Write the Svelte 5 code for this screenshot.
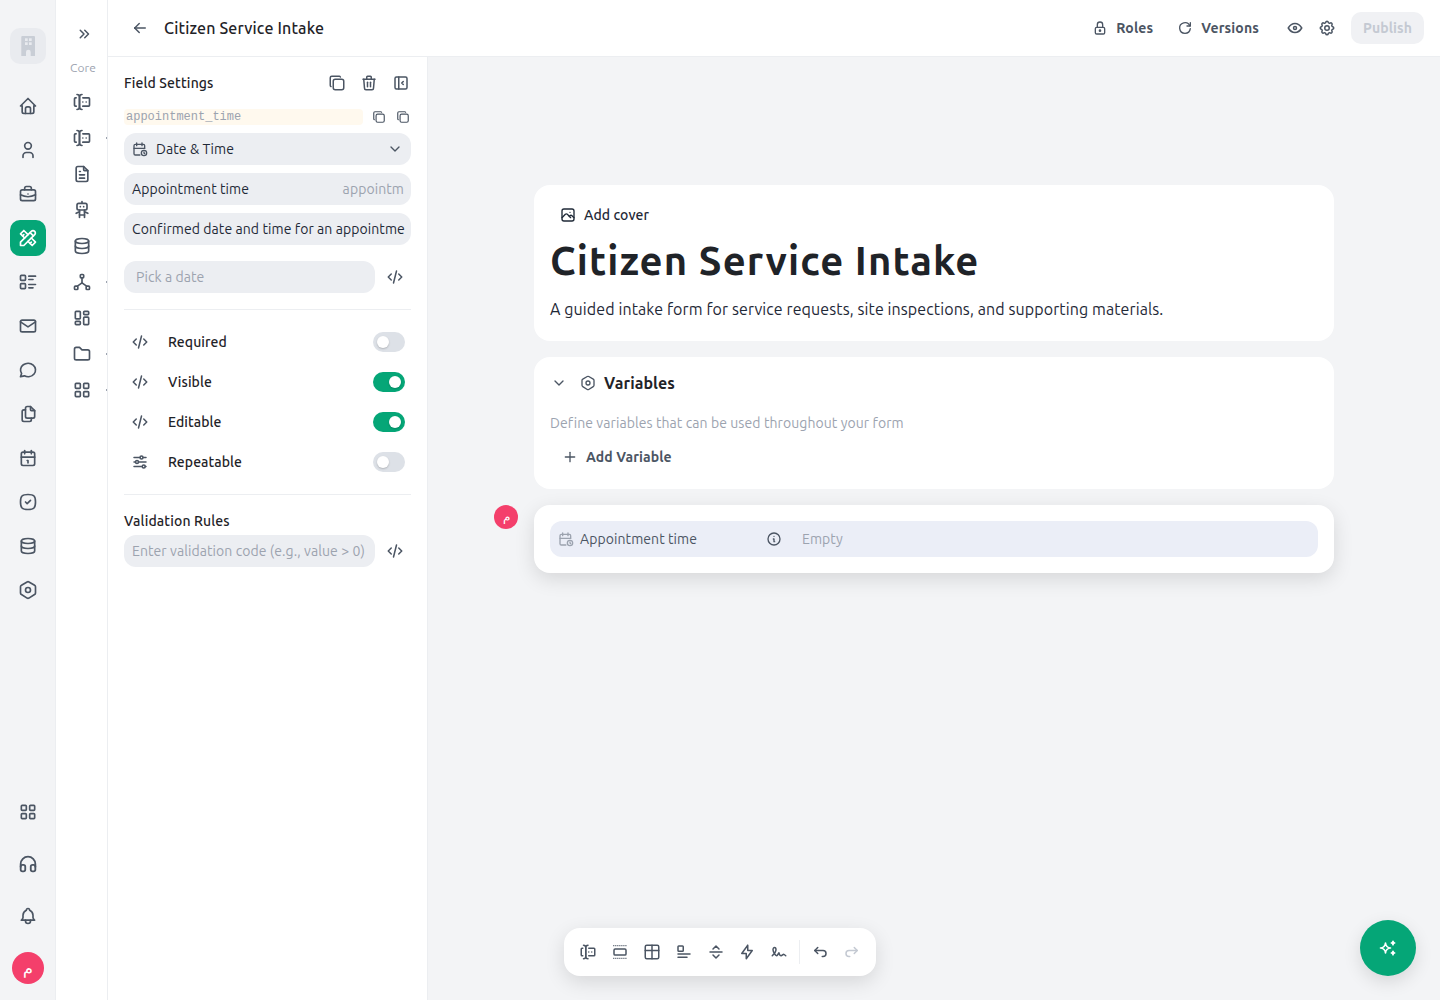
<script lang="ts">
	// Form builder: icon rail, block rail, field settings panel and canvas.
	const rect = (x: number, y: number, w: number, h: number, r = 1) =>
		`<rect x="${x}" y="${y}" width="${w}" height="${h}" rx="${r}"/>`;
	const paths = (...d: string[]) => d.map((p) => `<path d="${p}"/>`).join('');

	const icons: Record<string, string> = {
		home: paths('M5 12l-2 0l9 -9l9 9l-2 0', 'M5 12v7a2 2 0 0 0 2 2h10a2 2 0 0 0 2 -2v-7', 'M9 21v-6a2 2 0 0 1 2 -2h2a2 2 0 0 1 2 2v6'),
		user: paths('M8 7a4 4 0 1 0 8 0a4 4 0 0 0 -8 0', 'M6 21v-2a4 4 0 0 1 4 -4h4a4 4 0 0 1 4 4v2'),
		briefcase: paths('M3 9a2 2 0 0 1 2 -2h14a2 2 0 0 1 2 2v9a2 2 0 0 1 -2 2h-14a2 2 0 0 1 -2 -2z', 'M8 7v-2a2 2 0 0 1 2 -2h4a2 2 0 0 1 2 2v2', 'M12 12l0 .01', 'M3 13a20 20 0 0 0 18 0'),
		tools: paths('M3 21h4l13 -13a1.5 1.5 0 0 0 -4 -4l-13 13v4', 'M14.5 5.5l4 4', 'M12 8l-5 -5l-4 4l5 5', 'M7 8l-1.5 1.5', 'M16 12l5 5l-4 4l-5 -5', 'M16 17l-1.5 1.5'),
		list: paths('M13 5h8', 'M13 9h5', 'M13 15h8', 'M13 19h5') + rect(3, 4, 6, 6) + rect(3, 14, 6, 6),
		mail: paths('M3 7a2 2 0 0 1 2 -2h14a2 2 0 0 1 2 2v10a2 2 0 0 1 -2 2h-14a2 2 0 0 1 -2 -2v-10z', 'M3 7l9 6l9 -6'),
		chat: paths('M3 20l1.3 -3.9c-2.324 -3.437 -1.426 -7.872 2.1 -10.374c3.526 -2.501 8.59 -2.296 11.845 .48c3.255 2.777 3.695 7.266 1.029 10.501c-2.666 3.235 -7.615 4.215 -11.574 2.293l-4.7 1'),
		files: paths('M15 3v4a1 1 0 0 0 1 1h4', 'M18 17h-7a2 2 0 0 1 -2 -2v-10a2 2 0 0 1 2 -2h4l5 5v7a2 2 0 0 1 -2 2z', 'M16 17v2a2 2 0 0 1 -2 2h-7a2 2 0 0 1 -2 -2v-10a2 2 0 0 1 2 -2h2'),
		calendar: paths('M4 7a2 2 0 0 1 2 -2h12a2 2 0 0 1 2 2v12a2 2 0 0 1 -2 2h-12a2 2 0 0 1 -2 -2z', 'M16 3l0 4', 'M8 3l0 4', 'M4 11l16 0', 'M11 15h1v3'),
		check: paths('M9 12l2 2l4 -4', 'M12 3c7.2 0 9 1.8 9 9s-1.8 9 -9 9s-9 -1.8 -9 -9s1.8 -9 9 -9z'),
		database: paths('M4 6a8 3 0 1 0 16 0a8 3 0 1 0 -16 0', 'M4 6v6a8 3 0 0 0 16 0v-6', 'M4 12v6a8 3 0 0 0 16 0v-6'),
		hexagon: paths('M19.875 6.27a2.225 2.225 0 0 1 1.125 1.948v7.284c0 .809 -.443 1.555 -1.158 1.948l-6.75 4.27a2.269 2.269 0 0 1 -2.184 0l-6.75 -4.27a2.225 2.225 0 0 1 -1.158 -1.948v-7.285c0 -.809 .443 -1.554 1.158 -1.947l6.75 -3.98a2.33 2.33 0 0 1 2.25 0l6.75 3.98h-.033', 'M9 12a3 3 0 1 0 6 0a3 3 0 0 0 -6 0'),
		apps: rect(4, 4, 6, 6) + rect(14, 4, 6, 6) + rect(4, 14, 6, 6) + rect(14, 14, 6, 6),
		headphones: paths('M4 15a2 2 0 0 1 2 -2h1a2 2 0 0 1 2 2v3a2 2 0 0 1 -2 2h-1a2 2 0 0 1 -2 -2z', 'M15 15a2 2 0 0 1 2 -2h1a2 2 0 0 1 2 2v3a2 2 0 0 1 -2 2h-1a2 2 0 0 1 -2 -2z', 'M4 15v-3a8 8 0 0 1 16 0v3'),
		bell: paths('M10 5a2 2 0 1 1 4 0a7 7 0 0 1 4 6v3a4 4 0 0 0 2 3h-16a4 4 0 0 0 2 -3v-3a7 7 0 0 1 4 -6', 'M9 17v1a3 3 0 0 0 6 0v-1'),
		chevrons: paths('M7 7l5 5l-5 5', 'M13 7l5 5l-5 5'),
		forms: paths('M12 3a3 3 0 0 0 -3 3v12a3 3 0 0 0 3 3', 'M6 3a3 3 0 0 1 3 3v12a3 3 0 0 1 -3 3', 'M13 7h7a1 1 0 0 1 1 1v8a1 1 0 0 1 -1 1h-7', 'M5 7h-1a1 1 0 0 0 -1 1v8a1 1 0 0 0 1 1h1', 'M17 12h.01', 'M13 12h.01'),
		file: paths('M14 3v4a1 1 0 0 0 1 1h4', 'M17 21h-10a2 2 0 0 1 -2 -2v-14a2 2 0 0 1 2 -2h7l5 5v11a2 2 0 0 1 -2 2z', 'M9 9l1 0', 'M9 13l6 0', 'M9 17l6 0'),
		robot: paths('M6 6a2 2 0 0 1 2 -2h8a2 2 0 0 1 2 2v4a2 2 0 0 1 -2 2h-8a2 2 0 0 1 -2 -2z', 'M12 2v2', 'M9 12v9', 'M15 12v9', 'M5 16l4 -2', 'M15 14l4 2', 'M9 18h6', 'M10 8v.01', 'M14 8v.01'),
		sitemap: rect(10, 3, 4, 4) + rect(3, 17, 4, 4) + rect(17, 17, 4, 4) + paths('M12 7v6', 'M6.5 17l5.5 -4l5.5 4'),
		dashboard: rect(4, 4, 6, 9) + rect(4, 16, 6, 4) + rect(14, 11, 6, 9) + rect(14, 4, 6, 4),
		folder: paths('M5 4h4l3 3h7a2 2 0 0 1 2 2v8a2 2 0 0 1 -2 2h-14a2 2 0 0 1 -2 -2v-11a2 2 0 0 1 2 -2'),
		copy: paths('M7 9.667a2.667 2.667 0 0 1 2.667 -2.667h8.666a2.667 2.667 0 0 1 2.667 2.667v8.666a2.667 2.667 0 0 1 -2.667 2.667h-8.666a2.667 2.667 0 0 1 -2.667 -2.667z', 'M4.012 16.737a2.005 2.005 0 0 1 -1.012 -1.737v-10c0 -1.1 .9 -2 2 -2h10c.75 0 1.158 .385 1.5 1'),
		trash: paths('M4 7l16 0', 'M10 11l0 6', 'M14 11l0 6', 'M5 7l1 12a2 2 0 0 0 2 2h8a2 2 0 0 0 2 -2l1 -12', 'M9 7v-3a1 1 0 0 1 1 -1h4a1 1 0 0 1 1 1v3'),
		collapse: rect(4, 4, 16, 16, 2) + paths('M9 4v16', 'M15 10l-2 2l2 2'),
		calendarTime: paths('M11.795 21h-6.795a2 2 0 0 1 -2 -2v-12a2 2 0 0 1 2 -2h12a2 2 0 0 1 2 2v4', 'M14 18a4 4 0 1 0 8 0a4 4 0 0 0 -8 0', 'M15 3v4', 'M7 3v4', 'M3 11h16', 'M18 16.496v1.504l1 1'),
		chevronDown: paths('M6 9l6 6l6 -6'),
		code: paths('M7 8l-4 4l4 4', 'M17 8l4 4l-4 4', 'M14 4l-4 16'),
		sliders: paths('M12 6a2 2 0 1 0 4 0a2 2 0 1 0 -4 0', 'M4 6l8 0', 'M16 6l4 0', 'M6 12a2 2 0 1 0 4 0a2 2 0 1 0 -4 0', 'M4 12l2 0', 'M10 12l10 0', 'M15 18a2 2 0 1 0 4 0a2 2 0 1 0 -4 0', 'M4 18l11 0', 'M19 18l1 0'),
		arrowLeft: paths('M5 12l14 0', 'M5 12l6 6', 'M5 12l6 -6'),
		lock: paths('M5 13a2 2 0 0 1 2 -2h10a2 2 0 0 1 2 2v6a2 2 0 0 1 -2 2h-10a2 2 0 0 1 -2 -2v-6z', 'M11 16a1 1 0 1 0 2 0a1 1 0 0 0 -2 0', 'M8 11v-4a4 4 0 1 1 8 0v4'),
		reload: paths('M19.933 13.041a8 8 0 1 1 -9.925 -8.788c3.899 -1 7.935 1.007 9.425 4.747', 'M20 4v5h-5'),
		eye: paths('M10 12a2 2 0 1 0 4 0a2 2 0 0 0 -4 0', 'M21 12c-2.4 4 -5.4 6 -9 6c-3.6 0 -6.6 -2 -9 -6c2.4 -4 5.4 -6 9 -6c3.6 0 6.6 2 9 6'),
		gear: paths('M10.325 4.317c.426 -1.756 2.924 -1.756 3.35 0a1.724 1.724 0 0 0 2.573 1.066c1.543 -.94 3.31 .826 2.37 2.37a1.724 1.724 0 0 0 1.065 2.572c1.756 .426 1.756 2.924 0 3.35a1.724 1.724 0 0 0 -1.066 2.573c.94 1.543 -.826 3.31 -2.37 2.37a1.724 1.724 0 0 0 -2.572 1.065c-.426 1.756 -2.924 1.756 -3.35 0a1.724 1.724 0 0 0 -2.573 -1.066c-1.543 .94 -3.31 -.826 -2.37 -2.37a1.724 1.724 0 0 0 -1.065 -2.572c-1.756 -.426 -1.756 -2.924 0 -3.35a1.724 1.724 0 0 0 1.066 -2.573c-.94 -1.543 .826 -3.31 2.37 -2.37c1 .608 2.296 .07 2.572 -1.065z', 'M9 12a3 3 0 1 0 6 0a3 3 0 0 0 -6 0'),
		photo: paths('M15 8h.01', 'M3 6a3 3 0 0 1 3 -3h12a3 3 0 0 1 3 3v12a3 3 0 0 1 -3 3h-12a3 3 0 0 1 -3 -3v-12z', 'M3 16l5 -5c.928 -.893 2.072 -.893 3 0l5 5', 'M14 14l1 -1c.928 -.893 2.072 -.893 3 0l3 3'),
		plus: paths('M12 5l0 14', 'M5 12l14 0'),
		info: paths('M3 12a9 9 0 1 0 18 0a9 9 0 0 0 -18 0', 'M12 8h.01', 'M11 12h1v4h1'),
		container: rect(4, 8, 16, 8, 1.5) + '<path stroke-width="1.5" stroke-linecap="butt" stroke-dasharray="1.4 1.3" d="M3 3.500h18M3 20.500h18"/>',
		table: rect(3, 3, 18, 18, 2) + paths('M3 10h18', 'M12 3v18'),
		align: rect(4, 4, 7, 7, 1) + paths('M4 14.500h16', 'M4 19h12'),
		separator: paths('M4 12h16', 'M8 8l4 -4l4 4', 'M8 16l4 4l4 -4'),
		bolt: paths('M13 3l0 7l6 0l-8 11l0 -7l-6 0l8 -11'),
		signature: paths('M3 17c3.333 -3.333 5 -6 5 -8c0 -3 -1 -3 -2 -3s-2.032 1.085 -2 3c.034 2.048 1.658 4.877 2.5 6c1.5 2 2.5 2.5 3.5 1l2 -3c.333 2.667 1.333 4 3 4c.53 0 2.639 -2 3 -2c.517 0 1.517 .667 3 2'),
		undo: paths('M9 14l-4 -4l4 -4', 'M5 10h11a4 4 0 1 1 0 8h-1'),
		redo: paths('M15 14l4 -4l-4 -4', 'M19 10h-11a4 4 0 1 0 0 8h1'),
		sparkles: paths('M16 18a2 2 0 0 1 2 2a2 2 0 0 1 2 -2a2 2 0 0 1 -2 -2a2 2 0 0 1 -2 2zm0 -12a2 2 0 0 1 2 2a2 2 0 0 1 2 -2a2 2 0 0 1 -2 -2a2 2 0 0 1 -2 2zm-7 12a6 6 0 0 1 6 -6a6 6 0 0 1 -6 -6a6 6 0 0 1 -6 6a6 6 0 0 1 6 6z')
	};

	const railTop = ['home', 'user', 'briefcase', 'tools', 'list', 'mail', 'chat', 'files', 'calendar', 'check', 'database', 'hexagon'];
	const railBottom = [
		{ name: 'apps', size: 20 },
		{ name: 'headphones', size: 22 },
		{ name: 'bell', size: 20 }
	];
	// the last rail entries peek a clipped label at the panel edge
	const blocks = [
		{ name: 'forms' },
		{ name: 'forms', mark: true },
		{ name: 'file' },
		{ name: 'robot' },
		{ name: 'database' },
		{ name: 'sitemap', mark: true },
		{ name: 'dashboard' },
		{ name: 'folder', mark: true },
		{ name: 'apps', mark: true }
	];
	const toolbar = ['forms', 'container', 'table', 'align', 'separator', 'bolt', 'signature'];
	const toggles = [
		{ label: 'Required', icon: 'code', on: false },
		{ label: 'Visible', icon: 'code', on: true },
		{ label: 'Editable', icon: 'code', on: true },
		{ label: 'Repeatable', icon: 'sliders', on: false }
	];
</script>

{#snippet icon(name: string, size = 20)}
	<svg class="icon" width={size} height={size} viewBox="0 0 24 24" fill="none" stroke="currentColor" stroke-width="2" stroke-linecap="round" stroke-linejoin="round">{@html icons[name]}</svg>
{/snippet}

<div class="app">
	<nav class="rail">
		<div class="logo">
			<svg width="20" height="24" viewBox="0 0 20 24" fill="#c9ced6">
				<path d="M3.300 3a1 1 0 0 1 1-1h11.700a1 1 0 0 1 1 1v19h-4.300v-4a2.300 2.300 0 0 0-4.700 0v4H3.300z" />
				<g fill="#e9ebef">
					<rect x="7" y="4.300" width="2.700" height="2.700" />
					<rect x="11" y="4.300" width="2.700" height="2.700" />
					<rect x="7" y="8.300" width="2.700" height="2.700" />
					<rect x="11" y="8.300" width="2.700" height="2.700" />
				</g>
			</svg>
		</div>
		<div class="rail-list">
			{#each railTop as name}
				<div class="rail-btn" class:active={name === 'tools'}>{@render icon(name, 20)}</div>
			{/each}
		</div>
		<div class="rail-bottom">
			{#each railBottom as b}
				<div class="rail-btn">{@render icon(b.name, b.size)}</div>
			{/each}
			<div class="avatar large" dir="rtl">م</div>
		</div>
	</nav>

	<aside class="blocks">
		<div class="expand">{@render icon('chevrons', 18)}</div>
		<div class="core">Core</div>
		<div class="block-list">
			{#each blocks as b}
				<div class="block" class:mark={b.mark}>{@render icon(b.name, 20)}</div>
			{/each}
		</div>
	</aside>

	<div class="workspace">
		<header class="topbar">
			<div class="top-left">
				{@render icon('arrowLeft', 18)}
				<span class="page-title">Citizen Service Intake</span>
			</div>
			<div class="top-right">
				<span class="top-link">{@render icon('lock', 16)}Roles</span>
				<span class="top-link versions">{@render icon('reload', 16)}Versions</span>
				<span class="top-icon">{@render icon('eye', 18)}</span>
				<span class="top-icon gear">{@render icon('gear', 18)}</span>
				<span class="publish">Publish</span>
			</div>
		</header>

		<div class="body">
			<section class="panel">
				<div class="panel-head">
					<h2>Field Settings</h2>
					<div class="head-icons">
						{@render icon('copy', 18)}
						{@render icon('trash', 18)}
						{@render icon('collapse', 18)}
					</div>
				</div>
				<div class="key-row">
					<span class="key">appointment_time</span>
					{@render icon('copy', 14)}
					{@render icon('copy', 14)}
				</div>
				<div class="field select">
					{@render icon('calendarTime', 16)}
					<span>Date &amp; Time</span>
					<span class="select-arrow">{@render icon('chevronDown', 16)}</span>
				</div>
				<div class="field split"><span>Appointment time</span><span class="hint">appointm</span></div>
				<div class="field"><span>Confirmed date and time for an appointme</span></div>
				<div class="code-row pick">
					<div class="field placeholder date">Pick a date</div>
					<span class="code-btn">{@render icon('code', 18)}</span>
				</div>
				<hr />
				<div class="toggles">
					{#each toggles as t}
						<div class="toggle-row">
							<span class="toggle-icon">{@render icon(t.icon, 18)}</span>
							<span class="toggle-label">{t.label}</span>
							<span class="switch" class:on={t.on}></span>
						</div>
					{/each}
				</div>
				<hr />
				<h3>Validation Rules</h3>
				<div class="code-row">
					<div class="field placeholder"><span>Enter validation code (e.g., value &gt; 0)</span></div>
					<span class="code-btn">{@render icon('code', 18)}</span>
				</div>
			</section>

			<main class="canvas">
				<div class="column">
					<div class="card intro">
						<div class="add-cover">{@render icon('photo', 16)}<span>Add cover</span></div>
						<h1>Citizen Service Intake</h1>
						<p>A guided intake form for service requests, site inspections, and supporting materials.</p>
					</div>
					<div class="card vars">
						<div class="vars-head">
							{@render icon('chevronDown', 16)}
							<span class="hex">{@render icon('hexagon', 16)}</span>
							<span class="vars-title">Variables</span>
						</div>
						<div class="vars-desc">Define variables that can be used throughout your form</div>
						<div class="add-var">{@render icon('plus', 16)}<span>Add Variable</span></div>
					</div>
					<div class="card field-card">
						<div class="avatar small" dir="rtl">م</div>
						<div class="preview">
							<span class="preview-icon">{@render icon('calendarTime', 16)}</span>
							<span class="preview-label">Appointment time</span>
							<span class="preview-info">{@render icon('info', 16)}</span>
							<span class="preview-empty">Empty</span>
						</div>
					</div>
				</div>

				<div class="toolbar">
					{#each toolbar as name}
						<span class="tool">{@render icon(name, 18)}</span>
					{/each}
					<span class="tool-sep"></span>
					<span class="tool">{@render icon('undo', 18)}</span>
					<span class="tool muted">{@render icon('redo', 18)}</span>
				</div>
				<div class="fab">{@render icon('sparkles', 20)}</div>
			</main>
		</div>
	</div>
</div>

<style>
	:global(body) {
		margin: 0;
		background: #f3f4f6;
		font-family: Ubuntu, 'Noto Sans', sans-serif;
		color: #1f2328;
		letter-spacing: 0.005em;
	}

	.app {
		display: flex;
		height: 1000px;
		overflow: hidden;
	}

	.icon {
		display: block;
		flex: none;
	}

	.rail {
		width: 56px;
		flex: none;
		display: flex;
		flex-direction: column;
		align-items: center;
		padding: 28px 0 16px;
		box-sizing: border-box;
		background: #f3f4f6;
		border-right: 1px solid #eceef1;
		color: #4b5563;
	}

	.logo {
		width: 36px;
		height: 36px;
		border-radius: 10px;
		background: #e9ebef;
		display: flex;
		align-items: center;
		justify-content: center;
	}

	.rail-list {
		display: flex;
		flex-direction: column;
		gap: 8px;
		margin-top: 24px;
	}

	.rail-btn {
		width: 36px;
		height: 36px;
		border-radius: 10px;
		display: flex;
		align-items: center;
		justify-content: center;
	}

	.rail-btn.active {
		background: #05a677;
		color: #fff;
	}

	.rail-bottom {
		margin-top: auto;
		display: flex;
		flex-direction: column;
		align-items: center;
		gap: 16px;
	}

	.avatar {
		border-radius: 50%;
		background: #f43f6b;
		color: #fff;
		display: flex;
		align-items: center;
		justify-content: center;
	}

	.avatar.large {
		width: 32px;
		height: 32px;
		margin-top: 2px;
		font-size: 16px;
	}

	.avatar.small {
		position: absolute;
		left: -40px;
		top: 0;
		width: 24px;
		height: 24px;
		font-size: 12px;
	}

	.blocks {
		width: 52px;
		flex: none;
		box-sizing: border-box;
		background: #fff;
		border-right: 1px solid #eceef1;
		display: flex;
		flex-direction: column;
		align-items: center;
		color: #4b5563;
	}

	.expand {
		margin-top: 25px;
		margin-left: 5px;
	}

	.core {
		margin-top: 17px;
		margin-left: 3px;
		font-size: 12px;
		line-height: 16px;
		color: #9ca3af;
	}

	.block-list {
		margin-top: 8px;
		display: flex;
		flex-direction: column;
		margin-left: 1px;
	}

	.block {
		width: 36px;
		height: 36px;
		display: flex;
		align-items: center;
		justify-content: center;
		position: relative;
	}

	.block.mark::after {
		content: '';
		position: absolute;
		right: -7px;
		top: 17px;
		width: 1px;
		height: 2px;
		background: #9ca3af;
	}

	.workspace {
		flex: 1;
		min-width: 0;
		display: flex;
		flex-direction: column;
	}

	.topbar {
		height: 57px;
		flex: none;
		box-sizing: border-box;
		background: #fff;
		border-bottom: 1px solid #eceef1;
		display: flex;
		align-items: center;
		justify-content: space-between;
		padding: 0 16px 0 23px;
		color: #4b5563;
	}

	.top-left {
		display: flex;
		align-items: center;
		gap: 15px;
	}

	.page-title {
		font-size: 16px;
		font-weight: 500;
		letter-spacing: 0.01em;
		color: #1f2328;
	}

	.top-right {
		display: flex;
		align-items: center;
	}

	.top-link {
		display: flex;
		align-items: center;
		gap: 8px;
		font-size: 14px;
		font-weight: 700;
		letter-spacing: 0.01em;
		margin-right: 24px;
	}

	.top-link.versions {
		margin-right: 27px;
	}

	.top-icon {
		margin-right: 14px;
	}

	.top-icon.gear {
		margin-right: 15px;
	}

	.publish {
		height: 32px;
		width: 73px;
		border-radius: 10px;
		background: #f0f1f4;
		color: #c4c9d2;
		font-size: 14px;
		font-weight: 700;
		display: flex;
		align-items: center;
		justify-content: center;
	}

	.body {
		flex: 1;
		display: flex;
		min-height: 0;
	}

	.panel {
		width: 320px;
		flex: none;
		box-sizing: border-box;
		background: #fff;
		border-right: 1px solid #eceef1;
		padding: 16px 16px 0;
	}

	.panel-head {
		display: flex;
		align-items: center;
		justify-content: space-between;
		height: 20px;
	}

	h2 {
		margin: 0;
		font-size: 14px;
		font-weight: 500;
		letter-spacing: 0.01em;
	}

	.head-icons {
		display: flex;
		gap: 14px;
		color: #4b5563;
		margin-right: 1px;
	}

	.key-row {
		display: flex;
		align-items: center;
		gap: 10px;
		margin-top: 16px;
		color: #4b5563;
	}

	.key {
		width: 239px;
		height: 16px;
		margin-right: -1px;
		border-radius: 4px;
		background: #fff9ee;
		color: #9ca3af;
		font-family: 'Liberation Mono', monospace;
		font-size: 12px;
		line-height: 17px;
		letter-spacing: 0;
		padding-left: 2px;
		box-sizing: border-box;
	}

	.field {
		height: 32px;
		border-radius: 12px;
		background: #eceef2;
		display: flex;
		align-items: center;
		padding: 0 7px 0 8px;
		font-size: 14px;
		margin-top: 8px;
		color: #1f2937;
		overflow: hidden;
		white-space: nowrap;
	}

	.select {
		gap: 8px;
		padding-right: 8px;
	}

	.select > :global(svg) {
		color: #4b5563;
	}

	.select-arrow {
		margin-left: auto;
		color: #4b5563;
	}

	.split {
		justify-content: space-between;
	}

	.hint {
		color: #9ca3af;
	}

	.code-row {
		display: flex;
		align-items: center;
		gap: 11px;
	}

	.code-row.pick {
		margin-top: 16px;
	}

	.code-row .field {
		margin-top: 0;
		width: 251px;
		flex: none;
		box-sizing: border-box;
	}

	.placeholder {
		color: #9ca3af;
	}

	.date {
		padding-left: 12px;
	}

	.code-btn {
		color: #4b5563;
	}

	hr {
		border: none;
		border-top: 1px solid #eceef1;
		margin: 16px 0 0;
	}

	.toggles {
		padding: 16px 0;
		display: flex;
		flex-direction: column;
		gap: 8px;
	}

	.toggle-row {
		height: 32px;
		display: flex;
		align-items: center;
		padding: 0 6px 0 7px;
		font-size: 14px;
		font-weight: 500;
	}

	.toggle-icon {
		color: #4b5563;
		width: 37px;
	}

	.toggle-label {
		flex: 1;
	}

	.switch {
		width: 32px;
		height: 20px;
		border-radius: 10px;
		background: #dde1e7;
		position: relative;
	}

	.switch::after {
		content: '';
		position: absolute;
		top: 4px;
		left: 4px;
		width: 12px;
		height: 12px;
		border-radius: 50%;
		background: #fff;
		box-shadow: 0 1px 2px rgb(0 0 0 / 0.2);
	}

	.switch.on {
		background: #05a677;
	}

	.switch.on::after {
		left: 16px;
	}

	.toggles + hr {
		margin-top: 0;
	}

	h3 {
		margin: 18px 0 6px;
		font-size: 14px;
		line-height: 16px;
		font-weight: 500;
		letter-spacing: 0.01em;
	}

	.canvas {
		flex: 1;
		position: relative;
		min-width: 0;
		padding-top: 128px;
	}

	.column {
		width: 800px;
		margin: 0 auto;
		display: flex;
		flex-direction: column;
		gap: 16px;
	}

	.card {
		background: #fff;
		border-radius: 16px;
		padding: 16px;
		position: relative;
		box-sizing: border-box;
	}

	.intro {
		height: 156px;
		padding-top: 20px;
	}

	.add-cover {
		display: flex;
		align-items: center;
		gap: 8px;
		padding-left: 10px;
		font-size: 14px;
		font-weight: 500;
		line-height: 20px;
		color: #1f2937;
	}

	h1 {
		margin: 12px 0 0;
		font-size: 40px;
		line-height: 48px;
		font-weight: 700;
		color: #1f2328;
		letter-spacing: 1.1px;
	}

	.intro p {
		margin: 12px 0 0;
		font-size: 16px;
		line-height: 24px;
		letter-spacing: 0.1px;
		color: #1f2937;
	}

	.vars {
		height: 132px;
	}

	.vars-head {
		display: flex;
		align-items: center;
		color: #4b5563;
		height: 20px;
		margin-left: 1px;
	}

	.hex {
		margin-left: 13px;
	}

	.vars-title {
		margin-left: 8px;
		font-size: 16px;
		font-weight: 700;
		color: #1f2328;
	}

	.vars-desc {
		margin-top: 20px;
		font-size: 14px;
		line-height: 20px;
		color: #9ca3af;
	}

	.add-var {
		margin-top: 14px;
		padding-left: 12px;
		display: flex;
		align-items: center;
		gap: 8px;
		font-size: 14px;
		font-weight: 700;
		line-height: 20px;
		color: #4b5563;
	}

	.field-card {
		height: 68px;
		box-shadow: 0 6px 20px rgb(0 0 0 / 0.12);
	}

	.preview {
		height: 36px;
		border-radius: 12px;
		background: #ebeef7;
		display: flex;
		align-items: center;
		padding-left: 8px;
		font-size: 14px;
	}

	.preview-icon {
		color: #9ca3af;
	}

	.preview-label {
		margin-left: 6px;
		width: 186px;
		color: #4b5563;
	}

	.preview-info {
		color: #4b5563;
	}

	.preview-empty {
		margin-left: 20px;
		color: #9ca3af;
	}

	.toolbar {
		position: absolute;
		left: 136px;
		bottom: 24px;
		height: 48px;
		width: 312px;
		box-sizing: border-box;
		padding: 0 8px;
		border-radius: 16px;
		background: #fff;
		box-shadow: 0 6px 20px rgb(0 0 0 / 0.12);
		display: flex;
		align-items: center;
		color: #4b5563;
	}

	.tool {
		width: 32px;
		display: flex;
		justify-content: center;
	}

	.tool.muted {
		color: #c4c9d2;
	}

	.tool-sep {
		width: 1px;
		height: 24px;
		background: #eceef1;
		margin: 0 4px;
	}

	.fab {
		position: absolute;
		right: 24px;
		bottom: 24px;
		width: 56px;
		height: 56px;
		border-radius: 50%;
		background: #05a677;
		color: #fff;
		display: flex;
		align-items: center;
		justify-content: center;
		box-shadow: 0 6px 18px rgb(0 0 0 / 0.12);
	}
</style>
